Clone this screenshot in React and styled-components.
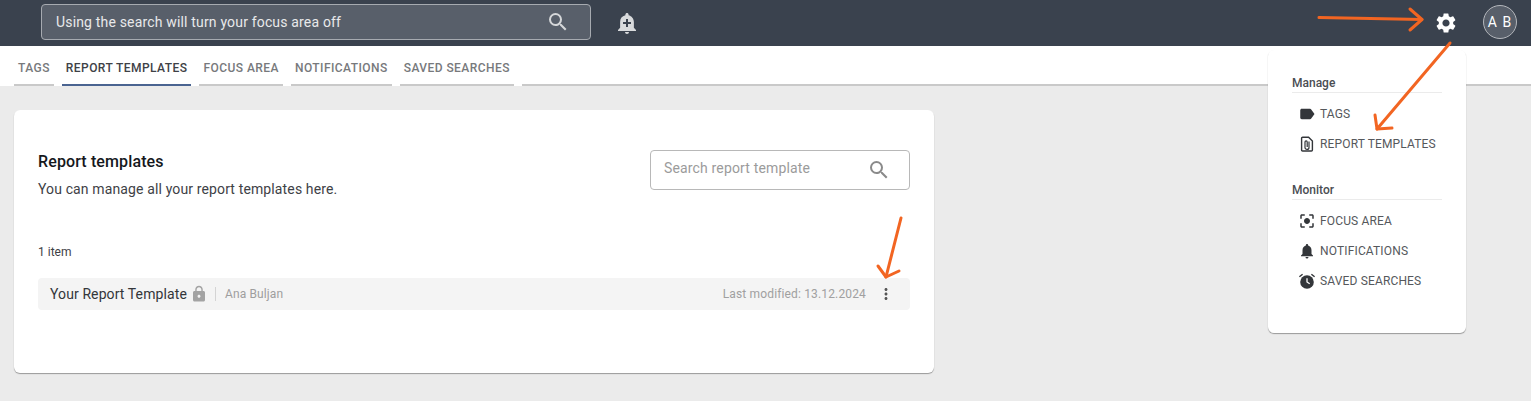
import styled, { createGlobalStyle } from "styled-components";
import {
  MdSearch,
  MdAddAlert,
  MdSettings,
  MdLabel,
  MdCenterFocusStrong,
  MdNotifications,
  MdLock,
  MdMoreVert,
} from "react-icons/md";

const GlobalStyle = createGlobalStyle`
  html, body { margin: 0; padding: 0; height: 100%; overflow: hidden; }
  body { font-family: Roboto, "Liberation Sans", sans-serif; background: #ebebeb; }
  * { box-sizing: border-box; }
`;

const Page = styled.div`
  position: relative;
  width: 1531px;
  height: 401px;
  overflow: hidden;
  background: #ebebeb;
`;

const TopBar = styled.header`
  height: 46px;
  background: #3a424e;
  display: flex;
  align-items: center;
  padding: 0 14px 0 41px;
`;

const GlobalSearch = styled.div`
  width: 550px;
  height: 36px;
  margin-top: -3px;
  background: #585f6a;
  border: 1px solid #a6aab0;
  border-radius: 4px;
  display: flex;
  align-items: center;
  justify-content: space-between;
  padding: 0 20px 0 14px;
  color: #e8e9ea;
  font-size: 14px;
  letter-spacing: 0.17px;
`;

const AlertButton = styled.span`
  display: flex;
  margin-left: 24px;
  margin-top: -1px;
  color: #d8dadc;
`;

const Spacer = styled.div`
  flex: 1;
`;

const GearButton = styled.span`
  display: flex;
  color: #fff;
  margin-right: 25px;
  margin-top: -1px;
`;

const Avatar = styled.div`
  width: 34px;
  height: 34px;
  margin-top: -2px;
  border-radius: 50%;
  background: #585f6a;
  border: 1px solid #b4b7bc;
  color: #fff;
  font-size: 14px;
  letter-spacing: 1px;
  display: flex;
  align-items: center;
  justify-content: center;
`;

const TabBar = styled.nav`
  height: 40px;
  background: #fff;
  display: flex;
  gap: 8px;
  padding-left: 14px;
`;

const Tab = styled.div`
  padding: 6px 4px 0;
  display: flex;
  align-items: center;
  height: 40px;
  border-bottom: 2px solid ${(props) => (props.$active ? "#4a6491" : "#c9c9c9")};
  color: ${(props) => (props.$active ? "#3e4146" : "#77797c")};
  font-size: 12px;
  font-weight: 500;
  letter-spacing: 0.44px;
  white-space: nowrap;
`;

const TabFiller = styled.div`
  flex: 1;
  border-bottom: 2px solid #c9c9c9;
`;

const Content = styled.main`
  padding: 24px 14px;
`;

const Card = styled.section`
  width: 920px;
  height: 263px;
  background: #fff;
  border-radius: 6px;
  box-shadow: 0 1px 1px rgba(0, 0, 0, 0.35);
  padding: 40px 24px 0;
`;

const CardHead = styled.div`
  display: flex;
  justify-content: space-between;
  align-items: flex-start;
`;

const Title = styled.h2`
  margin: 2px 0 0;
  font-size: 16px;
  line-height: 20px;
  font-weight: 500;
  color: #15181c;
  letter-spacing: 0.12px;
`;

const Subtitle = styled.p`
  margin: 7px 0 0;
  font-size: 14px;
  line-height: 20px;
  color: #3e4146;
  letter-spacing: 0.13px;
`;

const SearchBox = styled.div`
  width: 260px;
  height: 40px;
  border: 1px solid #b8b8b8;
  border-radius: 4px;
  display: flex;
  align-items: center;
  justify-content: space-between;
  padding: 0 18px 4px 13px;
  color: #9b9b9b;
  font-size: 14px;
  letter-spacing: 0.16px;
  svg {
    color: #8a8a8a;
    margin-top: 4px;
  }
`;

const ItemCount = styled.div`
  margin-top: 45px;
  font-size: 12px;
  line-height: 16px;
  color: #3e4146;
`;

const Row = styled.div`
  margin-top: 18px;
  height: 32px;
  background: #f4f4f4;
  border-radius: 4px;
  display: flex;
  align-items: center;
  padding: 0 16px 0 12px;
`;

const RowName = styled.span`
  font-size: 14px;
  color: #33363a;
  letter-spacing: 0.1px;
`;

const LockIcon = styled(MdLock)`
  color: #a3a3a3;
  margin-left: 3px;
`;

const Divider = styled.span`
  width: 1px;
  height: 14px;
  background: #d4d4d4;
  margin: 0 9px 0 7px;
`;

const RowAuthor = styled.span`
  font-size: 12px;
  color: #9e9e9e;
  letter-spacing: 0.13px;
`;

const RowMeta = styled.span`
  margin-left: auto;
  font-size: 12px;
  color: #a0a0a0;
  letter-spacing: 0.15px;
`;

const MoreIcon = styled(MdMoreVert)`
  color: #555;
  margin-left: 11px;
  margin-right: -1px;
`;

const Menu = styled.aside`
  position: absolute;
  left: 1268px;
  top: 50px;
  width: 198px;
  height: 283px;
  background: #fff;
  border-radius: 6px;
  box-shadow: 0 1px 1px rgba(0, 0, 0, 0.35);
  padding: 25px 0 0 24px;
`;

const MenuGroup = styled.div`
  width: 150px;
  margin-bottom: 23px;
`;

const MenuHeading = styled.div`
  height: 18px;
  font-size: 12px;
  line-height: 16px;
  font-weight: 500;
  color: #4a4d52;
  border-bottom: 1px solid #ebebeb;
  margin-bottom: 6px;
`;

const MenuItem = styled.div`
  height: 30px;
  display: flex;
  align-items: center;
  gap: 4px;
  padding-left: 6px;
  font-size: 12px;
  color: #55585c;
  letter-spacing: 0.15px;
  white-space: nowrap;
  svg {
    color: #33363a;
    flex-shrink: 0;
  }
`;

const Arrows = styled.svg`
  position: absolute;
  left: 0;
  top: 0;
  pointer-events: none;
`;

function ClipDocIcon() {
  return (
    <svg width="18" height="18" viewBox="0 0 18 18" fill="none" stroke="currentColor">
      <path d="M3.6 3.2c0-.6.4-1 1-1h6l3.8 3.8v9c0 .6-.4 1-1 1H4.6c-.6 0-1-.4-1-1z" strokeWidth="1.4" />
      <path d="M11 6.4v6a2 2 0 0 1-4 0V7a1.1 1.1 0 0 1 2.2 0v5" strokeWidth="1.2" />
    </svg>
  );
}

function AlarmIcon() {
  return (
    <svg width="18" height="18" viewBox="0 0 18 18">
      <circle cx="9" cy="10" r="6.8" fill="#33363a" />
      <path d="M1.4 4.8 4.6 2.2M16.6 4.8 13.4 2.2" stroke="#33363a" strokeWidth="1.4" fill="none" />
      <path d="M9 6.2V10l2.7 1.8" stroke="#fff" strokeWidth="1.3" fill="none" />
    </svg>
  );
}

const tabs = ["TAGS", "REPORT TEMPLATES", "FOCUS AREA", "NOTIFICATIONS", "SAVED SEARCHES"];

export default function App() {
  return (
    <Page>
      <GlobalStyle />
      <TopBar>
        <GlobalSearch>
          Using the search will turn your focus area off
          <MdSearch size={24} color="#d5d7d9" />
        </GlobalSearch>
        <AlertButton>
          <MdAddAlert size={24} />
        </AlertButton>
        <Spacer />
        <GearButton>
          <MdSettings size={24} />
        </GearButton>
        <Avatar>A B</Avatar>
      </TopBar>

      <TabBar>
        {tabs.map((tab) => (
          <Tab key={tab} $active={tab === "REPORT TEMPLATES"}>
            {tab}
          </Tab>
        ))}
        <TabFiller />
      </TabBar>

      <Content>
        <Card>
          <CardHead>
            <div>
              <Title>Report templates</Title>
              <Subtitle>You can manage all your report templates here.</Subtitle>
            </div>
            <SearchBox>
              Search report template
              <MdSearch size={24} />
            </SearchBox>
          </CardHead>
          <ItemCount>1 item</ItemCount>
          <Row>
            <RowName>Your Report Template</RowName>
            <LockIcon size={18} />
            <Divider />
            <RowAuthor>Ana Buljan</RowAuthor>
            <RowMeta>Last modified: 13.12.2024</RowMeta>
            <MoreIcon size={18} />
          </Row>
        </Card>
      </Content>

      <Menu>
        <MenuGroup>
          <MenuHeading>Manage</MenuHeading>
          <MenuItem>
            <MdLabel size={18} />
            TAGS
          </MenuItem>
          <MenuItem>
            <ClipDocIcon />
            REPORT TEMPLATES
          </MenuItem>
        </MenuGroup>
        <MenuGroup>
          <MenuHeading>Monitor</MenuHeading>
          <MenuItem>
            <MdCenterFocusStrong size={18} />
            FOCUS AREA
          </MenuItem>
          <MenuItem>
            <MdNotifications size={18} />
            NOTIFICATIONS
          </MenuItem>
          <MenuItem>
            <AlarmIcon />
            SAVED SEARCHES
          </MenuItem>
        </MenuGroup>
      </Menu>

      <Arrows width="1531" height="401" fill="none" stroke="#f26522" strokeWidth="3" strokeLinecap="round" strokeLinejoin="round">
        <path d="M1319 17.5 1422 19.5" />
        <path d="M1410 9 1422 19.5 1410 30" />
        <path d="M1450 43 1377 129" />
        <path d="M1375 115 1377 129 1392 128" />
        <path d="M901 218 886 277" />
        <path d="M878 266 886 277 899 271" />
      </Arrows>
    </Page>
  );
}
